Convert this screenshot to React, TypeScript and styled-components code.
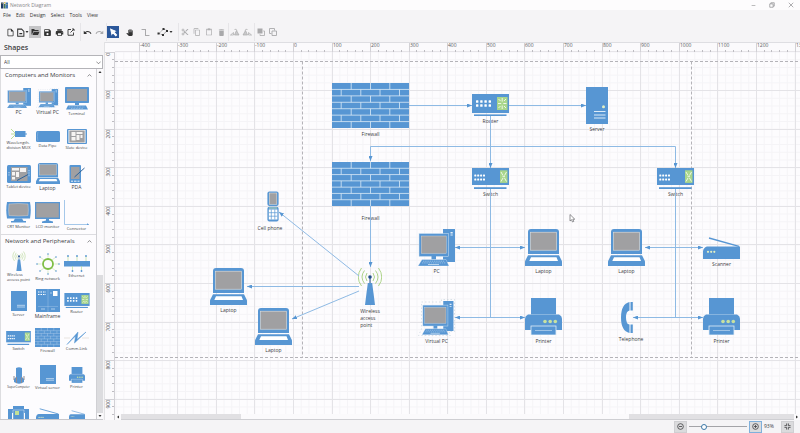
import React from "react";
import styled, { createGlobalStyle } from "styled-components";
import {
  MdOutlineInsertDriveFile,
  MdSave,
  MdPrint,
  MdUndo,
  MdRedo,
  MdPanTool,
  MdContentCut,
  MdContentCopy,
  MdContentPaste,
  MdDelete,
} from "react-icons/md";

const BLUE = "#5796d3";
const GRAY = "#a0a0a2";
const GREEN = "#a9d68b";
const LINE = "#8ebae4";

const GlobalStyle = createGlobalStyle`
  * { box-sizing: border-box; }
  html, body, #root { height: 100%; margin: 0; }
  body { font-family: "Open Sans", "Noto Sans", sans-serif; color: #3c3c3e; overflow: hidden; background: #f5f4f6; }
  button, select, input { font: inherit; color: inherit; margin: 0; padding: 0; }
`;

/* ---------- frame ---------- */

const Window = styled.div`
  display: flex;
  flex-direction: column;
  height: 100%;
  font-size: 5px;
  line-height: 7px;
`;

const TitleBar = styled.header`
  display: flex;
  align-items: center;
  flex: none;
  height: 10px;
  padding: 0 5px 0 1px;
  gap: 2px;
  background: #fdfcfd;
  color: #88888a;
`;

const WindowButtons = styled.div`
  display: flex;
  margin-left: auto;
  gap: 11px;
`;

const WindowButton = styled.button`
  display: flex;
  width: 8px;
  height: 8px;
  align-items: center;
  justify-content: center;
  border: 0;
  background: none;
`;

const MenuBar = styled.nav`
  display: flex;
  flex: none;
  height: 10px;
  align-items: center;
  padding: 0 3px;
  gap: 5px;
`;

const MenuItem = styled.button`
  border: 0;
  background: none;
  line-height: 8px;
  color: #333;
`;

const Toolbar = styled.div`
  display: flex;
  flex: none;
  align-items: center;
  height: 22px;
  padding: 2px 4px 0;
`;

const ToolGroup = styled.div<{ $first?: boolean; $tight?: boolean }>`
  display: flex;
  align-items: center;
  height: 18px;
  margin-left: ${(p) => (p.$first ? 0 : p.$tight ? 1 : 3)}px;
  border-left: ${(p) => (p.$first ? "0" : "1px solid #e6e5e8")};
`;

const ToolButton = styled.button<{ $look?: "open" | "active"; $faded?: boolean; $width?: number; $gap?: boolean }>`
  display: flex;
  align-items: center;
  justify-content: center;
  width: ${(p) => p.$width ?? 12}px;
  height: 12px;
  margin-right: ${(p) => (p.$gap ? 4 : 0)}px;
  border: 0;
  background: ${(p) => (p.$look === "open" ? "#c4c4c6" : p.$look === "active" ? "#2b579a" : "transparent")};
  color: ${(p) => (p.$look === "active" ? "#fff" : p.$faded ? "#a9a9ab" : "#333")};
  & > svg { flex: none; }
`;

const Body = styled.main`
  display: flex;
  flex: 1;
  min-height: 0;
`;

/* ---------- shapes panel ---------- */

const Sidebar = styled.aside`
  display: flex;
  flex-direction: column;
  flex: none;
  width: 105px;
  border-right: 1px solid #e2e2e4;
`;

const PanelTitle = styled.h2`
  margin: 0;
  padding: 1px 4px 2px;
  font-size: 7px;
  line-height: 10px;
  font-weight: 600;
`;

const FilterBox = styled.label`
  display: grid;
  flex: none;
  height: 14px;
  margin-right: 1px;
  align-items: center;
  & > * { grid-area: 1 / 1; }
  & > svg { justify-self: end; margin-right: 2px; pointer-events: none; }
`;

const Filter = styled.select`
  appearance: none;
  width: 100%;
  height: 14px;
  border: 1px solid #b4b4b8;
  border-radius: 0;
  background: #fff;
  padding-left: 3px;
`;

const PanelBody = styled.div`
  display: flex;
  flex: 1;
  min-height: 0;
  margin-right: 1px;
  border-bottom: 1px solid #c8c8cc;
`;

const ShapeList = styled.div`
  flex: 1;
  overflow: hidden;
  background: #fdfcfe;
  border-left: 1px solid #dddde0;
`;

const Section = styled.section`
  & + & { border-top: 1px solid #dcdce0; }
`;

const SectionTitle = styled.button`
  display: flex;
  width: 100%;
  height: 13px;
  padding: 0 4px;
  align-items: center;
  justify-content: space-between;
  border: 0;
  background: none;
  font-size: 6px;
  white-space: nowrap;
`;

const ShapeGrid = styled.div<{ $row: number }>`
  display: grid;
  grid-template-columns: repeat(3, 29px);
  grid-auto-rows: ${(p) => p.$row}px;
  padding: 0 3px;
`;

const ShapeItem = styled.figure`
  display: flex;
  flex-direction: column;
  align-items: center;
  justify-content: center;
  margin: 0;
  gap: 1px;
`;

const Caption = styled.figcaption<{ $size: number }>`
  font-size: ${(p) => p.$size}px;
  line-height: ${(p) => p.$size + 1}px;
  white-space: pre;
`;

/* ---------- scroll bars ---------- */

const VScroll = styled.div`
  display: flex;
  flex-direction: column;
  width: 7px;
  background: #dcdcdf;
  border-left: 1px solid #d0d0d4;
`;

const HScroll = styled.div`
  display: flex;
  flex: none;
  height: 6px;
  background: #e1e0e3;
  border-bottom: 1px solid #cfcfd3;
`;

const ScrollArrow = styled.button`
  display: flex;
  flex: none;
  width: 6px;
  height: 6px;
  align-items: center;
  justify-content: center;
  border: 0;
  background: #fbfafc;
`;

const Track = styled.div<{ $grow: number; $thumb?: boolean }>`
  flex: ${(p) => p.$grow} 1 0;
  background: ${(p) => (p.$thumb ? "#fbfafc" : "transparent")};
`;

/* ---------- canvas ---------- */

const Editor = styled.section`
  display: grid;
  flex: 1;
  min-width: 0;
  grid-template-columns: 10px 1fr;
  grid-template-rows: 10px 1fr 6px;
  background: #fbfafc;
`;

const TopRuler = styled.svg`
  grid-area: 1 / 1 / 2 / 3;
  width: 100%;
  height: 10px;
  border-top: 1px solid #dedee2;
`;

const SideRuler = styled.svg`
  grid-area: 2 / 1 / 4 / 2;
  width: 10px;
  height: 100%;
`;

const Surface = styled.div`
  position: relative;
  grid-area: 2 / 2;
  overflow: hidden;
  background: #fdfcfe;
`;

const Layer = styled.svg`
  position: absolute;
  inset: 0;
  width: 100%;
  height: 100%;
  pointer-events: none;
`;

const Node = styled.figure<{ $x: number; $y: number; $w: number; $gap: number }>`
  position: absolute;
  left: ${(p) => p.$x}px;
  top: ${(p) => p.$y}px;
  width: ${(p) => p.$w}px;
  display: flex;
  flex-direction: column;
  align-items: center;
  gap: ${(p) => p.$gap}px;
  margin: 0;
`;

const NodeLabel = styled.figcaption`
  white-space: pre;
`;

const Art = styled.svg<{ $w: number; $h: number }>`
  display: block;
  flex: none;
  width: ${(p) => p.$w}px;
  height: ${(p) => p.$h}px;
`;

/* ---------- status bar ---------- */

const StatusBar = styled.footer`
  display: flex;
  flex: none;
  height: 13px;
  align-items: center;
  justify-content: flex-end;
  padding-right: 6px;
  gap: 2px;
`;

const ZoomButton = styled.button<{ $hot?: boolean }>`
  display: flex;
  width: 13px;
  height: 12px;
  align-items: center;
  justify-content: center;
  border: 1px solid ${(p) => (p.$hot ? "#7fb0dc" : "#cfcfd2")};
  background: #dbdbdd;
`;

const ZoomSlider = styled.input`
  appearance: none;
  width: 58px;
  height: 8px;
  background: linear-gradient(#a4a4a8, #a4a4a8) center / 100% 1px no-repeat;
  &::-webkit-slider-thumb {
    appearance: none;
    width: 6px;
    height: 6px;
    border: 1px solid #3b78a8;
    border-radius: 50%;
    background: #fff;
  }
`;

const ZoomValue = styled.output`
  width: 15px;
`;

/* ---------- artwork ---------- */

type ArtProps = { w: number; h: number };

const Bricks = ({ w, h }: ArtProps) => (
  <Art $w={w} $h={h} viewBox="0 0 77 45" preserveAspectRatio="none">
    <rect width="77" height="45" fill={BLUE} />
    <g stroke="#dcebf8" strokeWidth="0.8" fill="none">
      {[1, 2, 3, 4, 5, 6].map((r) => (
        <path key={r} d={`M0 ${r * 6.43}H77`} />
      ))}
      {[0, 1, 2, 3, 4, 5, 6].map((r) => (
        <path
          key={`v${r}`}
          d={(r % 2 ? [9.2, 28.8, 48, 67.5] : [19.2, 38.5, 57.8]).map((x) => `M${x} ${r * 6.43}v6.43`).join("")}
        />
      ))}
    </g>
  </Art>
);

const ports = (x: number, y: number, dx: number, dy: number, s: number) =>
  [0, 1, 2, 3].flatMap((i) =>
    [0, 1].map((j) => <rect key={`${i}${j}`} x={x + i * dx} y={y + j * dy} width={s} height={s} rx={0.5} fill="#fff" />)
  );

const Router = ({ w, h }: ArtProps) => (
  <Art $w={w} $h={h} viewBox="0 0 37 22">
    <rect width="37" height="19" fill={BLUE} />
    <rect x="2" y="20.4" width="32.5" height="1.6" fill={BLUE} />
    {ports(4, 6.3, 4.2, 4, 2.4)}
    <rect x="25" y="3" width="10.5" height="13" fill={GREEN} />
    <path d="M26 9.5h3.2M31.3 9.5h3.2M30.2 4v3.6M30.2 11.5V15M26.5 5l2 2M34 5l-2 2M26.5 14l2-2M34 14l-2-2" stroke="#fff" strokeWidth=".8" />
  </Art>
);

const Switch = ({ w, h }: ArtProps) => (
  <Art $w={w} $h={h} viewBox="0 0 37 21">
    <rect width="37" height="17" fill={BLUE} />
    <rect x="2" y="19.2" width="32.5" height="1.8" fill={BLUE} />
    {ports(2.3, 6.4, 2.9, 4, 2)}
    <rect x="28" y="2.3" width="7.5" height="12.6" fill={GREEN} />
    <path d="M29 4l2 3.5M34.5 4l-2 3.5M29 13.5l2-3.5M34.5 13.5l-2-3.5M30.5 8.7h2.5" stroke="#fff" strokeWidth=".8" />
  </Art>
);

const Server = ({ w, h }: ArtProps) => (
  <Art $w={w} $h={h} viewBox="0 0 22 37" preserveAspectRatio="none">
    <rect width="22" height="37" fill={BLUE} />
    <circle cx="17.5" cy="19.7" r="1.5" fill="#e3f0c4" />
    <path d="M8 24.5h11.5M8 28h11.5M8 31h11.5" stroke="#dcebf8" strokeWidth="1" />
  </Art>
);

const BoxServer = ({ w, h }: ArtProps) => (
  <Art $w={w} $h={h} viewBox="0 0 16 20" preserveAspectRatio="none">
    <rect width="16" height="20" fill={BLUE} />
    <path d="M6 14.3h8M6 16h8" stroke="#dcebf8" strokeWidth=".7" />
  </Art>
);

const Laptop = ({ w, h }: ArtProps) => (
  <Art $w={w} $h={h} viewBox="0 0 37 37" preserveAspectRatio="none">
    <path d="M3 25V3q0-3 3-3h25q3 0 3 3v22z" fill={BLUE} />
    <rect x="5.5" y="3.2" width="26" height="18" fill={GRAY} stroke="#e3e0da" strokeWidth=".6" />
    <path d="M3 26.2h31l3 6V37H0v-4.8z" fill={BLUE} />
    <path d="M6 28.3h25.5l1.5 3.7H4.3z" fill="#fff" />
  </Art>
);

const Pc = ({ w, h, dashed }: ArtProps & { dashed?: boolean }) => (
  <Art $w={w} $h={h} viewBox="0 0 37 37" preserveAspectRatio="none">
    {dashed && <path d="M3.5 3h20V.5h13V32.500H31l1.500 4H.5L3.500 30z" fill="none" stroke="#c3d0db" strokeWidth=".6" strokeDasharray="1.500 2" />}
    <g transform={dashed ? "translate(4 2) scale(.85 .91)" : undefined}>
      <rect x="25" width="12" height="33" fill={BLUE} />
      <path d="M32.500 3h2.200v1.500h-2.200zM32.500 5.600h2.200v.8h-2.200z" fill="#e4eff9" />
      <rect x="1" y="4.5" width="29.5" height="23" fill={BLUE} stroke="#d5e5f4" strokeWidth=".5" />
      <rect x="3.2" y="7" width="25" height="17.5" fill={GRAY} stroke="#ddd" strokeWidth=".4" />
      <path d="M13.5 27h4.5v3.5h-4.5z" fill={BLUE} />
      <path d="M4 30.5h24l3 6.500H0z" fill={BLUE} stroke="#fff" strokeWidth=".3" />
      <path d="M5 32.200h22M4 33.900h24" stroke="#cfe2f4" strokeWidth=".5" strokeDasharray="1.400 .8" />
      <path d="M10 35.5h11" stroke="#cfe2f4" strokeWidth=".8" />
    </g>
  </Art>
);
const VirtualPc = (p: ArtProps) => <Pc {...p} dashed />;

const Terminal = ({ w, h }: ArtProps) => (
  <Art $w={w} $h={h} viewBox="0 0 24 23">
    <rect width="24" height="16" rx=".7" fill={BLUE} />
    <rect x="2" y="2" width="20" height="12" fill={GRAY} />
    <path d="M10 16h4v2h-4zM3 18.500h18l2 4H1z" fill={BLUE} />
    <path d="M4 20h16M6 21.500h12" stroke="#e4eff9" strokeWidth=".4" strokeDasharray="1 .6" />
  </Art>
);

const Printer = ({ w, h }: ArtProps) => (
  <Art $w={w} $h={h} viewBox="0 0 37 37">
    <rect x="6" width="25" height="17" fill={BLUE} />
    <path d="M3 16.5h31q3 1.5 3 4V32H0V20.500q0-2.500 3-4z" fill={BLUE} />
    <path d="M6 16.5h25" stroke="#cfe2f3" strokeWidth=".4" />
    <rect x="6" y="28" width="25" height="9" fill={BLUE} stroke="#e1edf8" strokeWidth=".8" />
    <path d="M10 32.5h17" stroke="#bdd7ee" strokeWidth=".7" />
    <g fill="#c8e2a0"><circle cx="20" cy="23.5" r="1.8" /><circle cx="25.2" cy="23.5" r="1.8" /><circle cx="30.3" cy="23.5" r="1.8" /></g>
  </Art>
);

const Scanner = ({ w, h }: ArtProps) => (
  <Art $w={w} $h={h} viewBox="0 0 37 22">
    <path d="M6 1L36 9.3" stroke={BLUE} strokeWidth="1.4" />
    <path d="M4 9.5h33V22H0v-8q1-4 4-4.500z" fill={BLUE} />
    <g fill="#e3f0c4"><circle cx="5" cy="14.8" r="1.1" /><circle cx="8.2" cy="14.8" r="1.1" /><circle cx="11.3" cy="14.8" r="1.1" /></g>
  </Art>
);

const Telephone = ({ w, h }: ArtProps) => (
  <Art $w={w} $h={h} viewBox="0 0 20 31">
    <path d="M8.5 0Q0 2 0 15.5T8.5 31v-8.500Q5 22 5 15.500T8.500 8.500z" fill={BLUE} />
    <path d="M9.5 0h2.300v8.500H9.500zM9.500 22.500h2.300V31H9.500z" fill={BLUE} />
  </Art>
);

const CellPhone = ({ w, h }: ArtProps) => (
  <Art $w={w} $h={h} viewBox="0 0 18 31">
    <rect x="6.4" y=".4" width="11.2" height="14.6" rx="2" fill={BLUE} />
    <rect x="8.3" y="2" width="7.5" height="11.3" fill={GRAY} stroke="#e8e3dc" strokeWidth=".5" />
    <rect x="6.4" y="15.8" width="11.2" height="14.6" rx="2" fill={BLUE} />
    <path d="M8 17h8" stroke="#cde7ab" strokeWidth=".8" />
    <rect x="7.8" y="18.5" width="8.6" height="10" fill="#fff" />
    <path d="M10.3 18.5v10M13.8 18.5v10M7.8 21.7h8.600M7.800 25.200h8.600" stroke={BLUE} strokeWidth=".7" />
  </Art>
);

const Wireless = ({ w, h }: ArtProps) => (
  <Art $w={w} $h={h} viewBox="0 0 24 38">
    <g fill="none" stroke="#a5cf7d" strokeWidth=".9">
      <path d="M9 6q-3 4 0 8M6.500 3.500q-5 6.500 0 13M3.500 1q-6.500 9 0 18" />
      <path d="M15 6q3 4 0 8M17.500 3.500q5 6.500 0 13M20.500 1q6.500 9 0 18" />
    </g>
    <path d="M12 10v7" stroke="#24508c" strokeWidth="1" />
    <circle cx="12" cy="10" r="1.8" fill="#24508c" />
    <path d="M9.8 16h4.400L17 38H7z" fill={BLUE} />
  </Art>
);

const Mux = ({ w, h }: ArtProps) => (
  <Art $w={w} $h={h} viewBox="0 0 16 10">
    <path d="M0 0l4 4M0 5h5M0 10l4-4" stroke="#b3da8c" strokeWidth=".9" />
    <rect x="4" y="2" width="10.5" height="6" fill={BLUE} />
    <path d="M14 5h2" stroke={BLUE} />
  </Art>
);

const Pipe = ({ w, h }: ArtProps) => (
  <Art $w={w} $h={h} viewBox="0 0 24 11">
    <rect width="24" height="11" rx="1.5" fill={BLUE} />
    <path d="M2 .5q-1.300 5 0 10" fill="none" stroke="#8cb9e4" strokeWidth=".6" />
  </Art>
);

const Slate = ({ w, h }: ArtProps) => (
  <Art $w={w} $h={h} viewBox="0 0 20 15">
    <rect width="20" height="15" rx="1" fill={BLUE} />
    <rect x="1.5" y="1" width="17" height="13" fill="#fff" />
    <rect x="2.3" y="1.5" width="15.4" height="12" fill={GRAY} />
    <path d="M4.500 3h4v4h-4zM9.500 3h6v2h-6zM9.500 6h3v5h-3zM13.500 6h2v3h-2zM4.500 8h4v3.500h-4z" fill="#f6f4f2" />
  </Art>
);

const Tablet = ({ w, h }: ArtProps) => (
  <Art $w={w} $h={h} viewBox="0 0 24 18">
    <rect width="24" height="18" rx="1.5" fill={BLUE} />
    <rect x="4" y="2" width="16.5" height="14" fill={GRAY} />
    <path d="M5 3h7v2.500H5zM13 3h6v4h-6zM5 7h3v3.500H5zM9 7h3v5H9zM5 12h3v2.500H5z" fill="#f6f4f2" />
    <path d="M10 15.500L21 9.500" stroke="#2d6298" strokeWidth="1" />
    <path d="M2 7v4M22 5v7" stroke="#dcebf8" strokeWidth=".8" strokeDasharray="1 .7" />
  </Art>
);

const Pda = ({ w, h }: ArtProps) => (
  <Art $w={w} $h={h} viewBox="0 0 16 18">
    <rect x=".5" width="11.5" height="18" rx="1" fill={BLUE} />
    <rect x="2" y="2" width="8.5" height="12" fill={GRAY} />
    <path d="M2 16.200h2M5 16.200h2.500M8.500 16.200h2" stroke="#fff" strokeWidth=".9" />
    <path d="M5.500 12L15.500 3" stroke="#2d6298" strokeWidth="1" />
  </Art>
);

const Crt = ({ w, h }: ArtProps) => (
  <Art $w={w} $h={h} viewBox="0 0 25 21">
    <path d="M1 0h23q1.500 8 0 16.500H1Q-.5 8 1 0z" fill={BLUE} />
    <path d="M3 2q9.500-1 19 0 .8 6 0 11.500-9.500 1-19 0Q2.200 8 3 2z" fill={GRAY} stroke="#ddd" strokeWidth=".4" />
    <path d="M9 16.500h7l1.500 2.500H20v1.500H5V19h2.500z" fill={BLUE} />
  </Art>
);

const Lcd = ({ w, h }: ArtProps) => (
  <Art $w={w} $h={h} viewBox="0 0 25 21">
    <rect width="25" height="17" fill={BLUE} />
    <rect x="1.2" y="1.2" width="22.6" height="14.3" fill={GRAY} />
    <path d="M11 17h3v1.500l4 1V21H7v-1.500l4-1z" fill={BLUE} />
  </Art>
);

const Elbow = ({ w, h }: ArtProps) => (
  <Art $w={w} $h={h} viewBox="0 0 25 25">
    <path d="M.5 0v24.500H25" fill="none" stroke={LINE} strokeWidth=".8" />
    <path d="M23 23.200l2 1.300-2 .5z" fill={BLUE} />
  </Art>
);

const Ring = ({ w, h }: ArtProps) => (
  <Art $w={w} $h={h} viewBox="0 0 24 22">
    <circle cx="12" cy="11" r="5" fill="none" stroke="#7fbe45" strokeWidth="1.8" />
    <path d="M12 1v3.500M12 17.500V21M1 11h4.500M18.500 11H23M4 4l4 3M20 4l-4 3M4 18l4-3M20 18l-4-3" stroke="#c5e2a6" strokeWidth=".6" />
    {[[12, 1], [12, 21], [1, 11], [23, 11], [4, 4], [20, 4], [4, 18], [20, 18]].map(([x, y]) => (
      <circle key={`${x}-${y}`} cx={x} cy={y} r=".8" fill={BLUE} />
    ))}
  </Art>
);

const Ethernet = ({ w, h }: ArtProps) => (
  <Art $w={w} $h={h} viewBox="0 0 26 17">
    <rect y="6" width="26" height="5.5" fill={BLUE} />
    <path d="M4 6V1M13 6V1M22 6V1M8.500 11v5M17.500 11v5" stroke="#b3da8c" strokeWidth=".6" />
    {[[4, 1], [13, 1], [22, 1], [8.5, 16], [17.5, 16]].map(([x, y]) => (
      <circle key={x} cx={x} cy={y} r=".9" fill={BLUE} />
    ))}
  </Art>
);

const Mainframe = ({ w, h }: ArtProps) => (
  <Art $w={w} $h={h} viewBox="0 0 24 23">
    <rect width="24" height="23" fill={BLUE} />
    <path d="M12 0v23M2 17.500h20" stroke="#a9cbea" strokeWidth=".4" />
    <path d="M2 3h8M2 5.500h8" stroke="#fff" strokeWidth="1.1" strokeDasharray="1.500 1" />
    <rect x="17" y="2" width="4.5" height="5" fill="#fff" />
    <path d="M14 4h2M5 20h4M15 20h4" stroke="#c4dcf2" strokeWidth=".8" />
  </Art>
);

const CommLink = ({ w, h }: ArtProps) => (
  <Art $w={w} $h={h} viewBox="0 0 25 14">
    <path d="M0 7h6M18 7h7" stroke="#dedad4" strokeWidth=".7" />
    <path d="M3 13.500L14 1l-1 7.500L22 1 10.500 12l1-7z" fill={BLUE} stroke={BLUE} strokeWidth=".5" />
  </Art>
);

const Super = ({ w, h }: ArtProps) => (
  <Art $w={w} $h={h} viewBox="0 0 12 17">
    <path d="M3 1q3-1.500 6 0v9l2 2v3q-5 3.500-10 0v-3l2-2z" fill={BLUE} />
    <path d="M1 9v4M11 9v4M3.500 10v6M8.500 10v6" stroke="#928c92" strokeWidth="1" />
  </Art>
);

const Plotter = ({ w, h }: ArtProps) => (
  <Art $w={w} $h={h} viewBox="0 0 21 18">
    <path d="M5 0h11v3h5v12h-4V7H4v8H0V3h5z" fill={BLUE} />
    <path d="M5 4h11v14H5z" fill={BLUE} stroke="#fff" strokeWidth=".4" />
    <rect x="7" y="5" width="4" height="4" fill="#c2e097" />
  </Art>
);

/* ---------- data ---------- */

type ArtKind = React.ComponentType<ArtProps>;
type PaletteEntry = [art: ArtKind, width: number, height: number, caption: string, size: number];

const computers: PaletteEntry[] = [
  [Pc, 24, 20, "PC", 5],
  [VirtualPc, 23, 20, "Virtual PC", 5],
  [Terminal, 24, 23, "Terminal", 4],
  [Mux, 16, 10, "Wavelength-\ndivision MUX", 4],
  [Pipe, 24, 11, "Data Pipe", 4],
  [Slate, 20, 15, "Slate device", 4],
  [Tablet, 24, 18, "Tablet device", 4],
  [Laptop, 24, 21, "Laptop", 5],
  [Pda, 16, 18, "PDA", 5],
  [Crt, 25, 21, "CRT Monitor", 4],
  [Lcd, 25, 21, "LCD monitor", 4],
  [Elbow, 25, 25, "Connector", 4],
];

const network: PaletteEntry[] = [
  [Wireless, 14, 20, "Wireless\naccess point", 4],
  [Ring, 24, 22, "Ring network", 4],
  [Ethernet, 26, 17, "Ethernet", 4],
  [BoxServer, 16, 20, "Server", 4],
  [Mainframe, 24, 23, "Mainframe", 5],
  [Router, 26, 15, "Router", 4],
  [Switch, 25, 14, "Switch", 4],
  [Bricks, 25, 19, "Firewall", 4],
  [CommLink, 25, 14, "Comm-Link", 4],
  [Super, 12, 17, "SuperComputer", 3],
  [BoxServer, 16, 19, "Virtual server", 4],
  [Printer, 16, 16, "Printer", 4],
  [Plotter, 21, 18, "", 4],
  [Scanner, 23, 14, "", 4],
  [Scanner, 16, 14, "", 4],
];

type DiagramNode = { art: ArtKind; x: number; y: number; w: number; h: number; label: string; gap?: number };

const nodes: DiagramNode[] = [
  { art: Bricks, x: 217, y: 31, w: 77, h: 45, label: "Firewall", gap: 3 },
  { art: Bricks, x: 217, y: 110, w: 77, h: 44, label: "Firewall", gap: 9 },
  { art: Router, x: 357, y: 42, w: 37, h: 22, label: "Router" },
  { art: Server, x: 471, y: 35, w: 22, h: 37, label: "Server" },
  { art: Switch, x: 357, y: 116, w: 37, h: 21, label: "Switch" },
  { art: Switch, x: 542, y: 116, w: 37, h: 21, label: "Switch" },
  { art: CellPhone, x: 146, y: 139, w: 18, h: 31, label: "Cell phone", gap: 3 },
  { art: Laptop, x: 95, y: 216, w: 37, h: 37, label: "Laptop" },
  { art: Laptop, x: 140, y: 256, w: 37, h: 37, label: "Laptop" },
  { art: Wireless, x: 243, y: 215, w: 24, h: 38, label: "Wireless\naccess\npoint", gap: 3 },
  { art: Pc, x: 303, y: 177, w: 37, h: 37, label: "PC" },
  { art: Laptop, x: 410, y: 177, w: 37, h: 37, label: "Laptop" },
  { art: VirtualPc, x: 303, y: 247, w: 37, h: 37, label: "Virtual PC" },
  { art: Printer, x: 410, y: 246, w: 37, h: 37, label: "Printer", gap: 3 },
  { art: Laptop, x: 493, y: 177, w: 37, h: 37, label: "Laptop" },
  { art: Scanner, x: 588, y: 185, w: 37, h: 22, label: "Scanner" },
  { art: Telephone, x: 506, y: 250, w: 20, h: 31, label: "Telephone", gap: 3 },
  { art: Printer, x: 588, y: 246, w: 37, h: 37, label: "Printer", gap: 3 },
];

const links: { d: string; both?: boolean; plain?: boolean }[] = [
  { d: "M294 53.5H357" },
  { d: "M394 53.5H471" },
  { d: "M375.5 64V116" },
  { d: "M375.5 94.5H255.5V109" },
  { d: "M375.5 94.5H560.5V116" },
  { d: "M255.5 154V215" },
  { d: "M375.5 137V265.5", plain: true },
  { d: "M560.5 137V265.5", plain: true },
  { d: "M340 195.5H410", both: true },
  { d: "M340 265.5H410", both: true },
  { d: "M530 195.5H588", both: true },
  { d: "M518 265.5H588", both: true },
  { d: "M244 224L164 160" },
  { d: "M244 234.5H132" },
  { d: "M244 239L177 267" },
];

const STEP = 38.58;
const ORIGIN_X = 178.5;
const range = (a: number, b: number) => Array.from({ length: b - a + 1 }, (_, i) => a + i);

/* ---------- small icons ---------- */

const Glyph = ({ d, size = 8, fill = "none" }: { d: string; size?: number; fill?: string }) => (
  <svg width={size} height={size} viewBox="0 0 16 16" fill={fill} stroke="currentColor" strokeWidth="1.8">
    <path d={d} />
  </svg>
);
const Caret = ({ d }: { d: string }) => (
  <svg width="4" height="4" viewBox="0 0 8 8" fill="#333">
    <path d={d} />
  </svg>
);
const DOWN = "M1 2h6L4 6z";
const UP = "M1 6h6L4 2z";
const LEFT = "M6 1v6L2 4z";
const RIGHT = "M2 1v6l4-3z";

const Palette = ({ title, entries, row }: { title: string; entries: PaletteEntry[]; row: number }) => (
  <Section>
    <SectionTitle aria-expanded="true">
      {title}
      <Glyph size={5} d="M2 11l6-6 6 6" />
    </SectionTitle>
    <ShapeGrid $row={row}>
      {entries.map(([Picture, w, h, text, size], i) => (
        <ShapeItem key={i}>
          <Picture w={w} h={h} />
          {text && <Caption $size={size}>{text}</Caption>}
        </ShapeItem>
      ))}
    </ShapeGrid>
  </Section>
);

const Grid = () => (
  <Layer>
    <g stroke="#f5f4f7" strokeWidth="1">
      {range(-24, 70).map((i) => (
        <path key={`x${i}`} d={`M${ORIGIN_X + (i * STEP) / 5} 0V2000`} />
      ))}
      {range(0, 50).map((i) => (
        <path key={`y${i}`} d={`M0 ${(i * STEP) / 5}H4000`} />
      ))}
    </g>
    <g stroke="#e4e3e7" strokeWidth="1">
      {range(-5, 17).map((i) => (
        <path key={`x${i}`} d={`M${Math.floor(ORIGIN_X + i * STEP) + 0.5} 0V2000`} />
      ))}
      {range(1, 10).map((i) => (
        <path key={`y${i}`} d={`M0 ${Math.floor(i * STEP) + 0.5}H4000`} />
      ))}
    </g>
    <g stroke="#b4b3b8" strokeWidth="1" strokeDasharray="3 2">
      <path d="M0 9.5H4000M0 305.5H4000M187.5 9.5V305.5M576.5 9.5V305.5" />
    </g>
  </Layer>
);

const Links = () => (
  <Layer>
    <defs>
      <marker id="arrow" markerUnits="userSpaceOnUse" markerWidth="5" markerHeight="4" refX="5" refY="2" orient="auto-start-reverse">
        <path d="M0 0l5 2-5 2z" fill={BLUE} />
      </marker>
    </defs>
    <g fill="none" stroke={LINE} strokeWidth="1">
      {links.map((l) => (
        <path key={l.d} d={l.d} markerEnd={l.plain ? undefined : "url(#arrow)"} markerStart={l.both ? "url(#arrow)" : undefined} />
      ))}
    </g>
    <path d="M455 162.500v6.500l1.500-1.300 1 2.300 1.300-.6-1-2.200h2z" fill="#fff" stroke="#77777b" strokeWidth=".8" />
  </Layer>
);

export default function App() {
  return (
    <Window>
      <GlobalStyle />
      <TitleBar>
        <svg width="7" height="7" viewBox="0 0 14 14" aria-hidden="true">
          <path d="M0 1h5v12H0z" fill="#1e3d66" />
          <path d="M6 4h3v9H6z" fill="#4b7d4a" />
          <path d="M9 1h5v12H9z" fill="#3f76b5" />
          <path d="M6 0h3v3H6zM1 3h3v1H1zM10 4h3v1h-3z" fill="#e2c35c" />
        </svg>
        <span>Network Diagram</span>
        <WindowButtons>
          <WindowButton aria-label="Minimize"><Glyph size={5} d="M2 8h12" /></WindowButton>
          <WindowButton aria-label="Restore"><Glyph size={6} d="M2 5h9v9H2zM5 5V2h9v9h-3" /></WindowButton>
          <WindowButton aria-label="Close"><Glyph size={6} d="M2 2l12 12M14 2L2 14" /></WindowButton>
        </WindowButtons>
      </TitleBar>
      <MenuBar>
        {["File", "Edit", "Design", "Select", "Tools", "View"].map((m) => (
          <MenuItem key={m}>{m}</MenuItem>
        ))}
      </MenuBar>
      <Toolbar>
        <ToolGroup $first>
          <ToolButton aria-label="New"><MdOutlineInsertDriveFile size={9} /></ToolButton>
          <ToolButton $width={13} aria-label="New from template">
            <Glyph size={9} d="M3 2h7l4 4v8.500H3zM6 10h5" />
            <Caret d={DOWN} />
          </ToolButton>
          <ToolButton $look="open" aria-label="Open">
            <svg width="9" height="8" viewBox="0 0 18 16" fill="#333">
              <path d="M1 2h5l2 2h7v2H5L2 13H1zM5.500 7.500H17L14 14H3z" />
            </svg>
          </ToolButton>
          <ToolButton aria-label="Save"><MdSave size={9} /></ToolButton>
          <ToolButton aria-label="Print"><MdPrint size={9} /></ToolButton>
          <ToolButton aria-label="Export"><Glyph d="M8 3H2v11.500h11V9M7 9l7-7M10 2h4v4" /></ToolButton>
        </ToolGroup>
        <ToolGroup>
          <ToolButton aria-label="Undo"><MdUndo size={9} /></ToolButton>
          <ToolButton $faded aria-label="Redo"><MdRedo size={9} /></ToolButton>
        </ToolGroup>
        <ToolGroup $tight>
          <ToolButton $look="active" $gap aria-label="Pointer"><Glyph size={9} fill="currentColor" d="M3 2l8 3.500-3 1 5.500 6-1.500 1.500-5.500-6-1.500 3z" /></ToolButton>
          <ToolButton $gap aria-label="Pan"><MdPanTool size={7} /></ToolButton>
          <ToolButton $faded $gap aria-label="Connector"><Glyph size={9} d="M1 2.500h7v11h7" /></ToolButton>
          <ToolButton $width={20} aria-label="Shape tools">
            <svg width="12" height="10" viewBox="0 0 24 20">
              <path d="M4 13L13 4l7 3-8 9z" fill="none" stroke="#333" strokeDasharray="2 1.500" strokeWidth="1.2" />
              <path d="M1 11h4v4H1zM11 2h4v4h-4zM18 6h4v4h-4zM10 14h4v4h-4z" fill="#333" />
            </svg>
            <Caret d={DOWN} />
          </ToolButton>
        </ToolGroup>
        <ToolGroup>
          <ToolButton $faded aria-label="Cut"><MdContentCut size={8} /></ToolButton>
          <ToolButton $faded aria-label="Copy"><MdContentCopy size={8} /></ToolButton>
          <ToolButton $faded aria-label="Paste"><MdContentPaste size={8} /></ToolButton>
          <ToolButton $faded aria-label="Delete"><MdDelete size={9} /></ToolButton>
        </ToolGroup>
        <ToolGroup $tight>
          <ToolButton $faded aria-label="Rotate left">
            <svg width="10" height="8" viewBox="0 0 20 16" fill="none" stroke="#a9a9ab" strokeWidth="1.4">
              <path d="M1 14h6V9zM9 3q4-2 5 2" /><path d="M9 14h9L13 5z" fill="#c9c9cb" />
            </svg>
          </ToolButton>
          <ToolButton $faded aria-label="Rotate right">
            <svg width="10" height="8" viewBox="0 0 20 16" fill="none" stroke="#a9a9ab" strokeWidth="1.4">
              <path d="M19 14h-6V9zM11 3Q7 1 6 5" /><path d="M11 14H2l5-9z" fill="#c9c9cb" />
            </svg>
          </ToolButton>
        </ToolGroup>
        <ToolGroup $tight>
          <ToolButton $faded aria-label="Bring to front">
            <svg width="8" height="8" viewBox="0 0 16 16"><path d="M1 1h10v10H1z" fill="#a9a9ab" /><path d="M12.500 6H15v9H6v-2.500" fill="none" stroke="#a9a9ab" strokeWidth="1.6" /></svg>
          </ToolButton>
          <ToolButton $faded aria-label="Send to back"><Glyph d="M5 11H1V1h10v4M6 6h9v9H6z" /></ToolButton>
        </ToolGroup>
      </Toolbar>
      <Body>
        <Sidebar>
          <PanelTitle>Shapes</PanelTitle>
          <FilterBox>
            <Filter aria-label="Shape category" defaultValue="All"><option>All</option></Filter>
            <Glyph size={5} d="M1 5l7 7 7-7" />
          </FilterBox>
          <PanelBody>
            <ShapeList>
              <Palette title="Computers and Monitors" entries={computers} row={38} />
              <Palette title="Network and Peripherals" entries={network} row={37} />
            </ShapeList>
            <VScroll>
              <ScrollArrow aria-label="Scroll up"><Caret d={UP} /></ScrollArrow>
              <Track $grow={200} $thumb />
              <Track $grow={138} />
              <ScrollArrow aria-label="Scroll down"><Caret d={DOWN} /></ScrollArrow>
            </VScroll>
          </PanelBody>
        </Sidebar>
        <Editor>
          <TopRuler fill="#5a5a5e" fontSize="5">
            <path d="M10 9H4000" stroke="#d2d1d6" />
            {range(-20, 80).map((i) => (
              <path key={i} d={`M${Math.floor(ORIGIN_X + 10 + (i * STEP) / 5) + 0.5} ${i % 5 ? 7 : 0}V9`} stroke={i % 5 ? "#bdbcc1" : "#d2d1d6"} />
            ))}
            {range(-4, 16).map((i) => (
              <text key={i} x={Math.floor(ORIGIN_X + 10 + i * STEP) + 1} y="4">{i * 100}</text>
            ))}
          </TopRuler>
          <SideRuler fill="#5a5a5e" fontSize="5">
            <path d="M9.500 0V2000" stroke="#d2d1d6" />
            {range(0, 60).map((i) => (
              <path key={i} d={`M${i % 5 ? 7 : 0} ${Math.floor((i * STEP) / 5) + 0.5}H9`} stroke={i % 5 ? "#bdbcc1" : "#d2d1d6"} />
            ))}
            {range(0, 9).map((i) => (
              <text key={i} transform={`translate(5 ${Math.floor(i * STEP) + 1}) rotate(-90)`} textAnchor="end">{i * 100}</text>
            ))}
          </SideRuler>
          <Surface>
            <Grid />
            {nodes.map(({ art: Picture, x, y, w, h, label, gap }) => (
              <Node key={`${x}-${y}`} $x={x} $y={y} $w={w} $gap={gap ?? 2}>
                <Picture w={w} h={h} />
                <NodeLabel>{label}</NodeLabel>
              </Node>
            ))}
            <Links />
          </Surface>
          <HScroll>
            <ScrollArrow aria-label="Scroll left"><Caret d={LEFT} /></ScrollArrow>
            <Track $grow={120} />
            <Track $grow={387} $thumb />
            <Track $grow={165} />
            <ScrollArrow aria-label="Scroll right"><Caret d={RIGHT} /></ScrollArrow>
          </HScroll>
        </Editor>
      </Body>
      <StatusBar>
        <ZoomButton aria-label="Zoom out"><Glyph size={7} d="M8 1.500a6.500 6.500 0 100 13 6.500 6.500 0 000-13M4.500 8h7" /></ZoomButton>
        <ZoomSlider type="range" aria-label="Zoom" min={0} max={400} defaultValue={93} />
        <ZoomButton $hot aria-label="Zoom in"><Glyph size={7} d="M8 1.500a6.500 6.500 0 100 13 6.500 6.500 0 000-13M4.500 8h7M8 4.500v7" /></ZoomButton>
        <ZoomValue>93%</ZoomValue>
        <ZoomButton aria-label="Fit to page"><Glyph size={7} d="M6 1v5H1M10 1v5h5M6 15v-5H1M10 15v-5h5" /></ZoomButton>
      </StatusBar>
    </Window>
  );
}
